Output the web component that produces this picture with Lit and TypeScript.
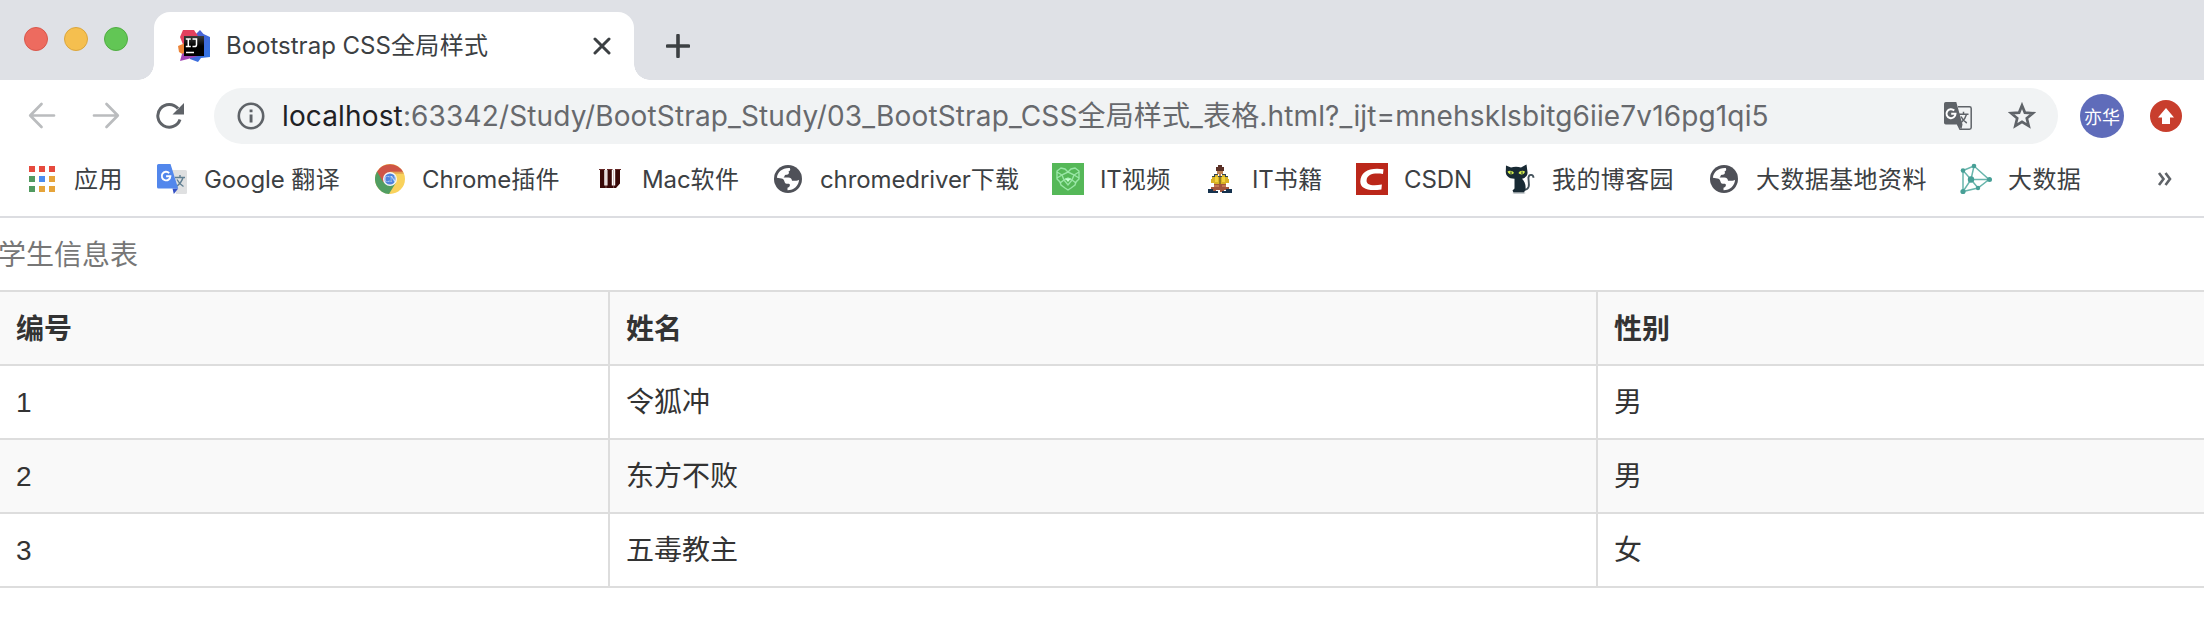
import { LitElement, html, css, svg } from "lit";
import { customElement } from "lit/decorators.js";

const appColors = ["#e64a3d", "#e64a3d", "#e64a3d", "#519a60", "#4a8cf0", "#e6a43a", "#519a60", "#e6a43a", "#e6a43a"];

const globe = html`<svg width="28" height="28" viewBox="0 0 28 28">
  <circle cx="14" cy="14" r="14" fill="#4f5158" />
  <path fill="#fff" d="M2.900 12.800C3.400 7 8.400 2.600 15.800 3c1 1.600.2 3-1.300 3.600 1.300 1.900-.3 3.300-2.500 3.200-1.700 0-1 2-2.500 2.700h4.700c2.700 0 3.700 1.300 3.800 3.300h3.300c1.600 0 2.800-.4 3.800-1.100-.3 5.800-5 10.400-11.600 10.600v-2.600c1.800-.4 2.700-1.800 2.300-3.200-.2-.6-1.500-.6-3-.7-2-.2-2-1.800-2.500-2.900-.5-1.400-1.300-2.300-2.900-2.400z" />
</svg>`;

const icons = {
  apps: html`<svg width="26" height="26" viewBox="0 0 26 26">
    ${appColors.map((c, i) => svg`<rect x=${(i % 3) * 10} y=${Math.floor(i / 3) * 10} width="6" height="6" fill=${c} />`)}
  </svg>`,
  translate: html`<svg width="30" height="30" viewBox="0 0 30 30">
    <path d="M13 6h15.500a1.500 1.500 0 0 1 1.500 1.500v21a1.500 1.500 0 0 1-1.500 1.500H19z" fill="#dfe0e1" />
    <g stroke="#607f92" stroke-width="1.400" fill="none"><path d="M18 13.500h10M23 11v2.500M26 13.500c-1 4-4 7-6.500 9M20 15.500c1.500 3 4 5.500 6.500 7" /></g>
    <path d="M15.500 24.500h5.700L16.800 30z" fill="#3450c4" />
    <path d="M1.500 0h12L21.200 24.500H1.500A1.500 1.500 0 0 1 0 23V1.500A1.500 1.500 0 0 1 1.500 0z" fill="#5287ec" />
    <path d="M12.200 9.100a4.300 4.300 0 1 0 1.200 3.200H9.100" fill="none" stroke="#fff" stroke-width="1.900" />
  </svg>`,
  chrome: html`<svg width="30" height="30" viewBox="0 0 30 30">
    <circle cx="15" cy="15" r="15" fill="#f9d25c" />
    <path d="M15 15 2 7.500A15 15 0 0 0 14 30l7-11.500z" fill="#519e62" />
    <path d="M2.100 7.400A15 15 0 0 1 28 7.800H15L8.500 18.500z" fill="#ce5446" />
    <path d="M15 7.800h13a15 15 0 0 1 .8 2H19z" fill="#b94b3c" opacity=".35" />
    <circle cx="15" cy="15" r="7" fill="#f6f6f5" />
    <circle cx="15" cy="15" r="5.600" fill="#4f83dc" />
    <text x="15" y="18" text-anchor="middle" font-family="Liberation Serif" font-size="8.500" fill="#dce8ff">CN</text>
  </svg>`,
  mac: html`<svg width="22" height="20" viewBox="0 0 22 20">
    <path d="M0 .5h6M8 .5h5.500M16 .5H22" stroke="#642827" stroke-width="1" />
    <path d="M1 1h4.300v15.500H8.500V1h4.300v15.500h3.400V1H21v13.500l-4 4.500H1z" fill="#380807" />
    <path d="M7 1v18M14.600 1v18" stroke="#a98280" stroke-width=".6" />
  </svg>`,
  globe,
  owl: html`<svg width="32" height="32" viewBox="0 0 32 32">
    <rect width="32" height="32" fill="#55b858" />
    <g fill="none" stroke="#a5edb3" stroke-width="1.400" stroke-opacity=".85">
      <path d="M9 5 5 8v8l3 3 1 3 4 3 3 2 3-2 4-3 1-3 3-3V8l-4-3-4 1-3 3-3-3z" />
      <path d="m5 9 5 3 6-3 6 3 5-3M5 15l5-3 2 5 4-2 4 2 2-5 5 3M8 20l4-3 4 5 4-5 4 3" />
    </g>
    <path d="M13 15.500h6L16 19z" fill="#c4ffd0" />
  </svg>`,
  reader: html`<svg width="24" height="28" viewBox="0 0 24 28" shape-rendering="crispEdges">
    <path d="M10 0h4v2h2v4H8V2h2z" fill="#5a3026" />
    <path d="M9 6h6v3h-2v2h-2V9H9z" fill="#bd8254" />
    <path d="M6 9h4v2h4V9h4v2h2v4H4v-4h2z" fill="#354653" />
    <path d="M4 12h3v-2h3v2h4v-2h3v2h3v2h1v4h-3v2h-5v1h-2v-1H6v-2H3v-4h1z" fill="#d9b326" />
    <path d="M7 12h3v5H7zM14 12h3v5h-3z" fill="#f3d33c" />
    <path d="M11 12h2v8h-2z" fill="#8d7a24" />
    <path d="M6 19h12v3h3v3h-5v2h-4v-2H8v2H3v-5h3z" fill="#a3563e" />
    <path d="M0 24h5v2h5v2H0zM14 26h4v-2h6v4H14z" fill="#16324e" />
    <path d="M6 20h5v2H6zM14 20h4v2h-4z" fill="#c37753" />
  </svg>`,
  csdn: html`<svg width="32" height="32" viewBox="0 0 32 32">
    <rect width="32" height="32" fill="#bb271a" />
    <path d="M27.500 6.200 27 11c-9-1.300-15.600 0-16.400 6-.6 5 5 6.200 15.300 4.600l-.5 4.800C12 28.600 4.300 25.500 4.300 18.500 4.500 8.500 14 4 27.500 6.200z" fill="#fff" />
  </svg>`,
  cat: html`<svg width="30" height="30" viewBox="0 0 30 30">
    <path d="M19.500 26c7-1 3.500-9 4-12.500.4-3.500 4.800-3.500 5 .3" fill="none" stroke="#42515a" stroke-width="1.900" />
    <path d="M1 1.500 6 3.500c3-1 7-1 10 0L21.500.5 22.500 8c.5 4-2.500 6-5.500 6.700 2.500 2.500 4 6 3.500 10.800L19 28.500H8.500l-1-2 2-2 0-9.800C3 14.500.5 11 .8 7z" fill="#182a34" />
    <path d="M2.500 7.500c2-1.500 5.500-.8 6.500 1.500-2 2.300-5.500 1.500-6.500-1.500zM13.500 9c1-2.500 4.500-3 6.500-1.500-.5 3-4.500 4-6.500 1.500z" fill="#d4ed4d" />
    <path d="M5.500 7.500h1v2.500h-1zM16.500 7.500h1v2.500h-1z" fill="#182a34" />
    <ellipse cx="14" cy="28.900" rx="6.500" ry=".7" fill="#8e989d" />
  </svg>`,
  graph: html`<svg width="32" height="32" viewBox="0 0 32 32">
    <path d="M14 3 3 7.500v21L18 25l11-8.500zM14 3l-3 13.500L3 7.500M3 28.500l8-12 18 0M11 16.500 18 25" fill="none" stroke="#68b5ac" stroke-width="1.500" />
    <g fill="#479f96"><circle cx="14" cy="3" r="2.300" /><circle cx="3" cy="7.500" r="2.300" /><circle cx="11" cy="16.500" r="3.200" /><circle cx="29.500" cy="16.500" r="2.500" /><circle cx="18" cy="25" r="2.200" /><circle cx="3" cy="28.500" r="2.600" /></g>
  </svg>`,
  idea: html`<svg width="32" height="32" viewBox="0 0 32 32">
    <defs>
      <linearGradient id="blue" x2="1" y2="1"><stop offset="0" stop-color="#5759cd" /><stop offset="1" stop-color="#2d79e7" /></linearGradient>
      <linearGradient id="black" x2="0" y2="1"><stop offset="0" stop-color="#3b3b3b" /><stop offset=".5" stop-color="#000" /></linearGradient>
    </defs>
    <path d="m18 4 4-4 3.500 4L32 7v20l-9 1-3 4-8-3V8z" fill="url(#blue)" />
    <path d="M2 7 5 0h11l4 6-2 6-12 5z" fill="#e3405f" />
    <path d="m0 16 6-2.500V25l-5-3z" fill="#ec8438" />
    <path d="m4 24 6-3 10 5-10 3-8 2z" fill="#a344b5" />
    <path d="M6 6h20v20H6z" fill="url(#black)" />
    <path d="M7.800 9h5M10.300 9v7.500M7.800 16.500h5M14.500 9h4v5.700q0 1.800-1.800 1.800h-2.200M8 22.500h8" fill="none" stroke="#fff" stroke-width="1.500" />
  </svg>`,
};

const bookmarks: { icon: keyof typeof icons; latin?: string; han?: string }[] = [
  { icon: "apps", han: "应用" },
  { icon: "translate", latin: "Google ", han: "翻译" },
  { icon: "chrome", latin: "Chrome", han: "插件" },
  { icon: "mac", latin: "Mac", han: "软件" },
  { icon: "globe", latin: "chromedriver", han: "下载" },
  { icon: "owl", latin: "IT", han: "视频" },
  { icon: "reader", latin: "IT", han: "书籍" },
  { icon: "csdn", latin: "CSDN" },
  { icon: "cat", han: "我的博客园" },
  { icon: "globe", han: "大数据基地资料" },
  { icon: "graph", han: "大数据" },
];

@customElement("browser-tabs")
export class BrowserTabs extends LitElement {
  static styles = css`
    :host { display: flex; height: 80px; background: #dfe1e6; color: #3c4043; }
    .lights { display: flex; gap: 16px; padding: 27px 0 0 24px; width: 130px; box-sizing: border-box; }
    .light { width: 24px; height: 24px; border-radius: 50%; box-sizing: border-box; border: 1px solid; }
    .close { background: #ed6b5f; border-color: #d9574b; }
    .min { background: #f5bf4f; border-color: #dba63d; }
    .max { background: #62c655; border-color: #50ad42; }
    .edge { width: 16px; height: 16px; align-self: flex-end; }
    .left { margin-left: 8px; background: radial-gradient(circle at 0 0, transparent 15.500px, #fff 16px); }
    .right { background: radial-gradient(circle at 100% 0, transparent 15.500px, #fff 16px); }
    .tab { display: flex; align-items: center; box-sizing: border-box; width: 480px; height: 68px; margin-top: 12px; padding: 0 23px 0 24px; background: #fff; border-radius: 16px 16px 0 0; }
    .title { flex: 1; margin-left: 16px; font: 24px/32px Inter, "Noto Sans CJK SC", sans-serif; }
    .han { letter-spacing: 0.4px; }
    svg { display: block; }
    .plus { margin: 34px 0 0 16px; }
  `;
  render() {
    return html`
      <div class="lights"><i class="light close"></i><i class="light min"></i><i class="light max"></i></div>
      <i class="edge left"></i>
      <div class="tab">
        ${icons.idea}<span class="title">Bootstrap CSS<span class="han">全局样式</span></span>
        <svg width="18" height="18" viewBox="0 0 18 18"><path d="m2 2 14 14M16 2 2 16" stroke="#3c4043" stroke-width="3" stroke-linecap="round" /></svg>
      </div>
      <i class="edge right"></i>
      <svg class="plus" width="24" height="24" viewBox="0 0 24 24"><path d="M12 1.500v21M1.500 12h21" stroke="#3c4043" stroke-width="3.600" stroke-linecap="round" /></svg>
    `;
  }
}

@customElement("browser-toolbar")
export class BrowserToolbar extends LitElement {
  static styles = css`
    :host { display: flex; align-items: center; height: 72px; padding: 0 22px 0 28px; box-sizing: border-box; }
    svg { display: block; flex: none; }
    .fwd { margin-left: 36px; }
    .reload { margin-left: 36px; }
    .omnibox { display: flex; align-items: center; box-sizing: border-box; height: 56px; width: 1844px; margin-left: 30px; padding: 0 22px 0 23px; border-radius: 28px; background: #f1f3f4; }
    .url { flex: 1; margin-left: 17px; color: #67696d; white-space: nowrap; font: 28px/40px Inter, "Noto Sans CJK SC", sans-serif; letter-spacing: 0.14px; }
    .host { color: #202124; }
    .star { margin-left: 36px; }
    .avatar { display: grid; place-items: center; width: 44px; height: 44px; margin-left: 22px; border-radius: 50%; background: #5f6cba; color: #fff; font: 18px/44px "Noto Sans CJK SC", sans-serif; }
    .update { margin-left: 26px; }
  `;
  render() {
    return html`
      <svg width="28" height="28" viewBox="0 0 28 28"><path d="M26 13.500H2.500M13.500 2 2.200 13.500 13.500 25" fill="none" stroke="#babcbe" stroke-width="2.700" stroke-linecap="round" stroke-linejoin="round" /></svg>
      <svg class="fwd" width="28" height="28" viewBox="0 0 28 28"><path d="M2 13.500h23.500M14.500 2l11.300 11.500L14.500 25" fill="none" stroke="#babcbe" stroke-width="2.700" stroke-linecap="round" stroke-linejoin="round" /></svg>
      <svg class="reload" width="28" height="28" viewBox="0 0 28 28"><path d="M24 17.500A11.400 11.400 0 1 1 22 6.500" fill="none" stroke="#5f6368" stroke-width="3" /><path d="M28 1v11.500H16.500z" fill="#5f6368" /></svg>
      <div class="omnibox">
        <svg width="28" height="28" viewBox="0 0 28 28"><circle cx="14" cy="14" r="12.200" fill="none" stroke="#5f6368" stroke-width="2.600" /><path d="M12.600 7.500h2.900v2.700h-2.900zM12.600 12.500h2.900v8h-2.900z" fill="#5f6368" /></svg>
        <span class="url"><span class="host">localhost</span>:63342/Study/BootStrap_Study/03_BootStrap_CSS全局样式_表格.html?_ijt=mnehsklsbitg6iie7v16pg1qi5</span>
        <svg width="28" height="28" viewBox="0 0 28 28">
          <path d="M14 4.800h11.500a1.700 1.700 0 0 1 1.700 1.700v19a1.700 1.700 0 0 1-1.700 1.700H16l-2.500-5" fill="none" stroke="#5f6368" stroke-width="1.500" />
          <path d="M1.800 0h10.500l6.200 22.500H13L17.500 27l1-4.500H1.800A1.800 1.800 0 0 1 0 20.700V1.800A1.800 1.800 0 0 1 1.800 0z" fill="#5f6368" />
          <path d="M10.200 8.500a4.500 4.500 0 1 0 1.300 3.200H7.200" fill="none" stroke="#fff" stroke-width="2" />
          <path d="M15 12.300h9.500M19.500 9.800v2.500M22.500 12.300c-.8 3.500-3 6-5 8M17 14.500c1.200 3 3.500 5 5.800 6.500" fill="none" stroke="#5f6368" stroke-width="1.500" />
        </svg>
        <svg class="star" width="28" height="28" viewBox="0 0 28 28"><path d="m14 3.400 2.900 7.200 8 .6-6.100 5.100 1.900 7.700-6.700-4.100L7.300 24l1.900-7.700-6.100-5.100 8-.6z" fill="none" stroke="#5f6368" stroke-width="2.700" /></svg>
      </div>
      <div class="avatar">亦华</div>
      <svg class="update" width="32" height="32" viewBox="0 0 32 32"><circle cx="16" cy="16" r="16" fill="#c83e2d" /><path d="m16 8 8 9.500h-4V24h-8v-6.500H8z" fill="#fff" /></svg>
    `;
  }
}

@customElement("bookmarks-bar")
export class BookmarksBar extends LitElement {
  static styles = css`
    :host { display: flex; align-items: center; justify-content: space-between; height: 66px; padding: 0 32px 10px 26px; box-sizing: border-box; border-bottom: 2px solid #dcdde1; color: #3c4043; font: 24px/36px Inter, "Noto Sans CJK SC", sans-serif; }
    .list { display: grid; grid-template-columns: 130px 218px 220px 178px 280px 152px 152px 148px 204px 252px auto; }
    .item { display: flex; align-items: center; gap: 16px; white-space: nowrap; }
    .icon { display: grid; place-items: center; width: 32px; height: 32px; }
    .label { padding-top: 2px; letter-spacing: -0.1px; }
    .han { letter-spacing: 0.4px; }
    svg { display: block; }
  `;
  render() {
    return html`
      <div class="list">
        ${bookmarks.map((b) => html`<div class="item"><span class="icon">${icons[b.icon]}</span><span class="label">${b.latin ?? ""}<span class="han">${b.han ?? ""}</span></span></div>`)}
      </div>
      <svg width="15" height="16" viewBox="0 0 15 16"><path d="m2 2 4.500 6L2 14M8.500 2 13 8l-4.500 6" fill="none" stroke="#5f6368" stroke-width="2.600" /></svg>
    `;
  }
}

@customElement("student-table")
export class StudentTable extends LitElement {
  static styles = css`
    :host { display: block; color: #333; font: 28px/40px "Liberation Sans", "Noto Sans CJK SC", sans-serif; }
    .caption { padding: 18px 0 14px; margin-left: -2px; color: #777; border-bottom: 2px solid #ddd; }
    .row { display: grid; grid-template-columns: 610px 988px 1fr; border-bottom: 2px solid #ddd; }
    .striped { background: #f9f9f9; }
    .cell { padding: 17px 16px 15px; border-right: 2px solid #ddd; }
    .cell:last-child { border-right: 0; }
    .head { font-weight: 700; }
    .head .cell { padding: 18px 16px 14px; }
  `;
  private rows = [["编号", "姓名", "性别"], ["1", "令狐冲", "男"], ["2", "东方不败", "男"], ["3", "五毒教主", "女"]];
  render() {
    return html`
      <div class="caption">学生信息表</div>
      ${this.rows.map((r, i) => html`<div class="row ${i === 0 ? "head" : ""} ${i % 2 === 0 ? "striped" : ""}">${r.map((c) => html`<div class="cell">${c}</div>`)}</div>`)}
    `;
  }
}

@customElement("app-root")
export class AppRoot extends LitElement {
  static styles = css`
    :host { display: block; height: 620px; background: #fff; overflow: hidden; }
  `;
  render() {
    return html`<browser-tabs></browser-tabs><browser-toolbar></browser-toolbar><bookmarks-bar></bookmarks-bar><student-table></student-table>`;
  }
}
